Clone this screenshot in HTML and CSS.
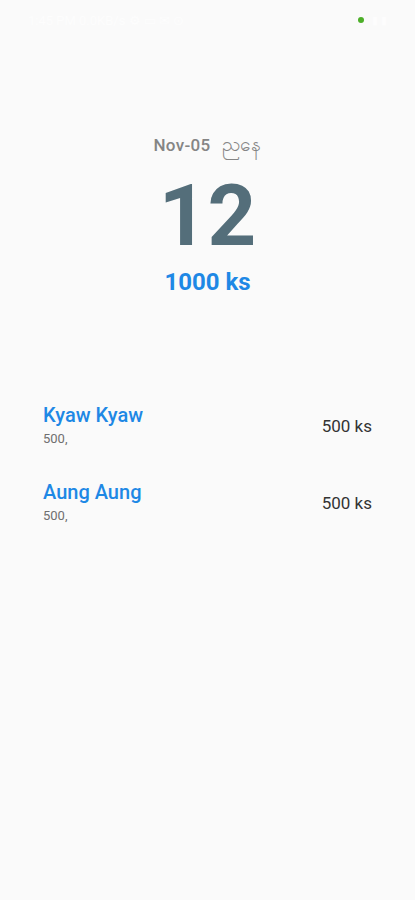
FILE: index.html
```html
<!doctype html>
<html lang="en">
<head>
    <meta charset="UTF-8">
    <meta name="viewport" content="width=device-width, initial-scale=1.0">
    <title>Lottery</title>
    <link rel="stylesheet" href="styles.css">
</head>
<body>
<div class="status-bar">
    <span class="status-time">1:45 PM 0.0KB/s ⚙ ▭ ✉ ⊙</span>
    <span class="status-dot"></span>
    <span class="status-icons">▮ ▮</span>
</div>
<div class="summary">
    <div class="summary-date">Nov-05 <span class="mm">ညနေ</span></div>
    <div class="summary-number">12</div>
    <div class="summary-total">1000 ks</div>
</div>
<ul class="bet-list">
    <li class="bet-item">
        <div class="bet-info">
            <div class="bet-name">Kyaw Kyaw</div>
            <div class="bet-detail">500,</div>
        </div>
        <div class="bet-amount">500 ks</div>
    </li>
    <li class="bet-item">
        <div class="bet-info">
            <div class="bet-name">Aung Aung</div>
            <div class="bet-detail">500,</div>
        </div>
        <div class="bet-amount">500 ks</div>
    </li>
</ul>
</body>
</html>
```
FILE: styles.css
```css
* {
    margin: 0;
    padding: 0;
    list-style: none;
    box-sizing: border-box;
}
body {
    width: 415px;
    height: 900px;
    background: #fafafa;
    font-family: Roboto, "Noto Sans", sans-serif;
    overflow: hidden;
}
.status-bar {
    height: 40px;
    display: flex;
    align-items: center;
    padding: 0 28px;
    color: #fdfdfd;
    font-size: 13px;
}
.status-time {
    flex: 1;
}
.status-dot {
    width: 6px;
    height: 6px;
    border-radius: 50%;
    background: #4caf28;
    margin-right: 8px;
}
.status-icons {
    font-size: 11px;
}
.summary {
    margin-top: 94px;
    text-align: center;
}
.summary-date {
    font-size: 17px;
    font-weight: 500;
    letter-spacing: 0.3px;
    color: #858585;
    line-height: 22px;
}
.summary-date .mm {
    margin-left: 7px;
    font-size: 19px;
}
.summary-number {
    font-size: 85px;
    font-weight: 700;
    color: #546e7a;
    line-height: 100px;
    margin-top: 10px;
}
.summary-total {
    font-size: 24px;
    font-weight: 700;
    color: #1e88e5;
    line-height: 32px;
}
.bet-list {
    margin-top: 89px;
    padding: 0 43px;
}
.bet-item {
    display: flex;
    align-items: center;
    height: 77px;
}
.bet-info {
    flex: 1;
}
.bet-name {
    font-size: 20px;
    font-weight: 500;
    color: #1e88e5;
    line-height: 24px;
}
.bet-detail {
    font-size: 13px;
    color: #6f6f6f;
    line-height: 18px;
    margin-top: 3px;
}
.bet-amount {
    font-size: 17px;
    color: #333;
}
```
